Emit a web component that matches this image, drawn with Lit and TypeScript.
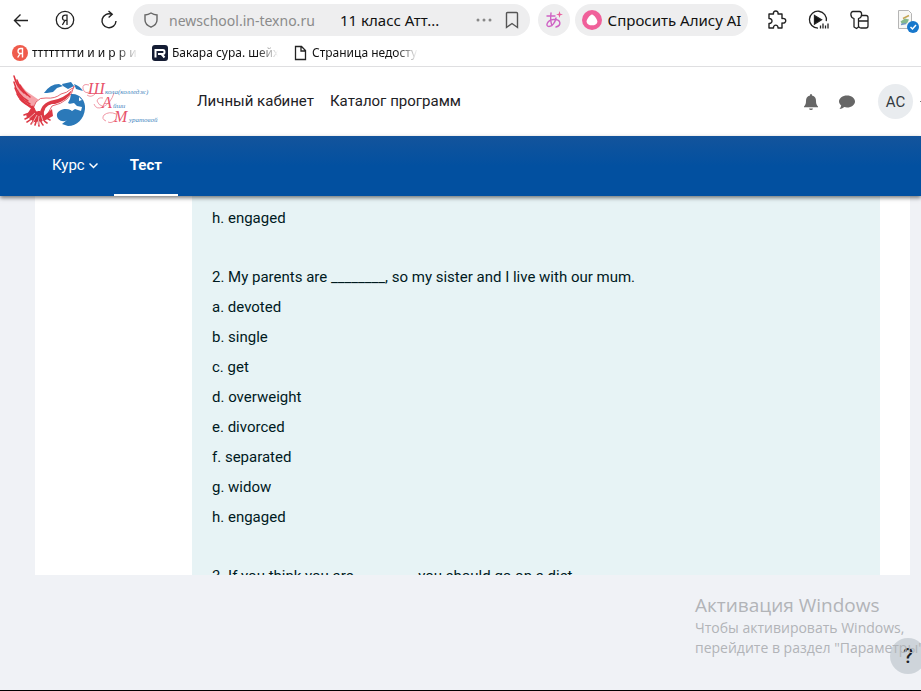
import { LitElement, html, css, svg } from "lit";
import { customElement } from "lit/decorators.js";

const question = (title: string, options: string[]) => html`
  <section class="question">
    ${title ? html`<p class="title">${title}</p>` : ""}
    <ul class="options">${options.map((o) => html`<li>${o}</li>`)}</ul>
  </section>`;

@customElement("browser-bar")
class BrowserBar extends LitElement {
  static styles = css`
    :host { display: block; background: #fff; border-bottom: 1px solid #dfdfe1; font-family: "Noto Sans", "Open Sans", sans-serif; color: #111; }
    button, a, input { font: inherit; color: inherit; text-decoration: none; }
    button { border: 0; background: none; padding: 0; display: flex; align-items: center; justify-content: center; }
    svg { display: block; flex: none; }
    .toolbar { display: flex; align-items: center; height: 40px; padding-left: 9px; }
    .tools { display: flex; flex: none; }
    .nav { gap: 20px; margin-right: 12px; }
    .ext { gap: 18px; margin-left: 17px; padding-right: 2px; }
    .address { flex: 1; min-width: 0; height: 32px; border-radius: 16px; background: #eeeeef; display: flex; align-items: center; padding: 0 10px 0 9px; font-size: 14px; }
    .url { border: 0; background: none; padding: 0; width: 160px; margin: 0 11px 0 9px; color: #8b8b8b; outline: 0; }
    .name { flex: 1; white-space: nowrap; font-size: 15px; }
    .more { margin-right: 12px; }
    .translate { width: 32px; height: 32px; border-radius: 50%; background: #eeeeef; margin: 0 5px 0 8px; }
    .alice { width: 173px; height: 32px; border-radius: 16px; background: #eeeeef; gap: 6px; font-size: 15px; white-space: nowrap; }
    .bookmarks { display: flex; gap: 14px; height: 26px; padding-left: 12px; align-items: center; font-size: 12px; }
    .bookmark { display: flex; align-items: center; gap: 4px; }
    .label { width: 106px; line-height: 20px; overflow: hidden; white-space: nowrap; -webkit-mask-image: linear-gradient(90deg, #000 80%, transparent); mask-image: linear-gradient(90deg, #000 80%, transparent); }
  `;

  render() {
    return html`
      <div class="toolbar">
        <div class="tools nav">
          <button aria-label="Назад"><svg width="24" height="24" fill="none" stroke="#222" stroke-width="1.4"><path d="M19 12.500H5.500M11.500 6.500l-6 6 6 6"/></svg></button>
          <button aria-label="Яндекс"><svg width="24" height="24" fill="none" stroke="#222" stroke-width="1.300"><circle cx="12" cy="12" r="8.700"/><path d="M14 17V7.200h-1.700c-3.600 0-3.800 5.200-.3 5.200h2M12 12.400L9.400 17"/></svg></button>
          <button aria-label="Обновить"><svg width="24" height="24" fill="none" stroke="#222" stroke-width="1.400"><path d="M14.500 6.200A7 7 0 1 0 19 13M11.500 3l3.700 3.300-3.600 3.200"/></svg></button>
        </div>
        <div class="address">
          <svg width="18" height="18" fill="none" stroke="#666" stroke-width="1.400"><path d="M9 2c2 1.300 4 1.900 6 2v5c0 3.500-2.500 5.700-6 7.200C5.500 14.700 3 12.500 3 9V4c2-.1 4-.7 6-2z"/></svg>
          <input class="url" aria-label="Адрес" value="newschool.in-texno.ru">
          <span class="name">11 класс Атт...</span>
          <button class="more" aria-label="Ещё"><svg width="16" height="16" fill="#888"><circle cx="2" cy="8" r="1.500"/><circle cx="8" cy="8" r="1.500"/><circle cx="14" cy="8" r="1.500"/></svg></button>
          <button aria-label="В закладки"><svg width="16" height="18" fill="none" stroke="#555" stroke-width="1.400"><path d="M2.500 2.500q0-1 1-1h9q1 0 1 1v14L8 12.500l-5.500 4z"/></svg></button>
        </div>
        <button class="translate" aria-label="Перевести страницу"><svg width="20" height="20" fill="none" stroke="#cf62c4" stroke-width="1.400" stroke-linecap="round"><path d="M3 6h8M7 3c-.5 4-.5 9 1 12.500M12 8c-1 5-4 8.500-7 8.500-4 0-2-6.500 4.500-7 8-.5 8 6 2.500 7.500"/><path d="M15.500 1l.8 2.700 2.700.8-2.700.8-.8 2.700-.8-2.700-2.700-.8 2.700-.8z" fill="#e9609f" stroke="none"/></svg></button>
        <button class="alice"><svg width="20" height="20"><circle cx="10" cy="10" r="10" fill="#f0609a"/><path d="M10 4.500c2 0 5.800 5.500 5.400 7.500-.5 2.600-2.500 3.300-5.400 3.300S5.100 14.600 4.600 12C4.200 10 8 4.500 10 4.500z" fill="#fff"/></svg>Спросить Алису AI</button>
        <div class="tools ext">
          <button aria-label="Расширения"><svg width="24" height="24" fill="none" stroke="#222" stroke-width="1.400" stroke-linejoin="round"><path d="M4 6h4.500c-1-4 5.500-4 4.500 0H17v4.500c5-1 5 5.500 0 4.500V20h-4c.5-3.800-5-3.800-4.500 0H4v-4.500c4 .5 4-5.500 0-5z"/></svg></button>
          <button aria-label="Видео"><svg width="24" height="24" fill="none" stroke="#222" stroke-width="1.300"><path d="M11 20.200a8.500 8.500 0 1 1 8.300-7M13.500 20.500v-3M16 20.500v-5M18.500 20.500v-3M21 20.500v-5"/><path d="M7.500 7.500l7 4.300-7 4.300z" fill="#111"/></svg></button>
          <button aria-label="Пароли"><svg width="24" height="24" fill="none" stroke="#222" stroke-width="1.300" stroke-linejoin="round"><path d="M5 10.500C.5 9 1.500 3.500 4 3.500h6.500c2.500 0 3.500 5.500-1 7V19l-2 1.500L5 19zM12.500 7.500H17q2 0 2 2V18q0 2-2 2h-5q-2 0-2-1.500M10 13h9"/></svg></button>
          <button aria-label="Дополнение"><svg width="28" height="28"><path d="M7.500 4.500h10l3 3v15h-13z" fill="#f7f7f5" stroke="#b5b5b5"/><path d="M9.500 15.500l4.500-3 4 1-2 4-5 .5z" fill="#86b98c"/><path d="M12 12.500l6-3" stroke="#c5a552" stroke-width="1.500"/><path d="M10 18.500l5-1" stroke="#779ac5" stroke-width="1.500"/><circle cx="22" cy="21" r="6" fill="#1878cc"/><path d="M19.500 21l2 2 3.500-4" fill="none" stroke="#fff" stroke-width="1.500"/></svg></button>
        </div>
      </div>
      <nav class="bookmarks">
        <a class="bookmark" href="#"><svg width="16" height="16"><circle cx="8" cy="8" r="8" fill="#ef5b4c"/><path d="M10.500 12.500v-9H8.700c-3.400 0-3.600 5-.3 5h1.800M8.200 8.500l-2.500 4" fill="none" stroke="#fff" stroke-width="1.400"/></svg><span class="label">тттттттти и и р р и и</span></a>
        <a class="bookmark" href="#"><svg width="16" height="16"><rect width="16" height="16" rx="3" fill="#141c33"/><path d="M3.500 12.500V5h7.500q1.500 0 1.500 2T11 9H6M9.500 9l3 3.500" fill="none" stroke="#fff" stroke-width="2"/></svg><span class="label">Бакара сура. шейх</span></a>
        <a class="bookmark" href="#"><svg width="16" height="16" fill="none" stroke="#222" stroke-width="1.300"><path d="M3.500 1.500h6l4 4v9h-10zM9 1.500V6h4.500"/></svg><span class="label">Страница недоступна</span></a>
      </nav>`;
  }
}

@customElement("school-logo")
class SchoolLogo extends LitElement {
  static styles = css`
    :host { display: block; }
    svg { display: block; }
    .script { font-family: "Liberation Serif", serif; font-style: italic; }
    .cap { fill: #e8526a; font-size: 16px; }
    .rest { fill: #3f86c0; font-size: 7px; }
  `;
  render() {
    const wing = [[2, 1, 12, 18], [5, 5, 15, 20], [2, 7, 16, 26], [8, 10, 18, 22], [3, 13, 18, 29], [5, 19, 20, 32], [8, 24, 22, 34]];
    const tail = [[12, 40], [13, 44], [15, 47], [19, 49], [23, 50], [27, 51], [31, 50], [35, 48], [38, 45]];
    return html`
      <svg width="150" height="54" role="img" aria-label="Логотип школы">
        <path d="M59 19c8-1 15 6 14 15-1 10-8 17-17 17l-6-2 5-4c-4 3-11 0-10-6 2-5 9-6 14-4l3-4-6-3 2-4z" fill="#2b79b9"/>
        <path d="M32 18q6-9 15-9l4 2-6 2-4 4-6 1zM50 9l9-2 3 4-6 3-5-3zM62 9q6 2 9 7l-7-2z" fill="#2b79b9"/>
        <path d="M57 29l5-1 3 3 5 1-1 4-6-2-3 2-4-3zM67 22l3 3-3 1z" fill="#fff"/>
        <path d="M14 16L27 25 31 23 36 28 28 38 18 33 9 24 6 16 2 3 9 10z" fill="#f5a3a9"/>
        <path d="M24 27q4-5 10-4 9 1 15-4 6-1 10-5 4-1 3-3-3 16-22 20l-5 9-10 4-5-8z" fill="#fff" stroke="#e25560" stroke-width="0.900"/>
        <path d="M40 29q-9 2-8 12l-5 2q1-16 15-18 10-2 18-10-3 10-17 14z" fill="#dc3945"/>
        <path d="M21 30l4 8 7 3 8-7 1 7-9 5-10 1-8-6z" fill="#dc3945"/>
        ${wing.map(([x, y, a, b]) => svg`<path d="M${x} ${y}Q${x + 3} ${b - 6} ${a} ${b}" fill="none" stroke="#df3541" stroke-width="1.500" stroke-linecap="round"/>`)}
        ${tail.map(([x, y]) => svg`<path d="M${x} ${y}Q${(x + 27) / 2 - 1} ${y - 3} 27 37" fill="none" stroke="#dc3945" stroke-width="1.600" stroke-linecap="round"/>`)}
        <g fill="none" stroke="#fff" stroke-width="0.600"><path d="M14 46l9-8M20 49l5-9M26 50l1-9M32 49l-3-9"/></g>
        <g fill="none" stroke="#ec7f90" stroke-width="0.800"><path d="M77 10q-7-2-6 4 2 6 8 2M75 20q4 3 8-1M92 32q-6-2-7-6 1-4 6-3M82 29q2 6 9 3 8-4 11-14M94 46q-5-2-2-6 5-4 12-1M96 47q4 2 8-3"/></g>
        <g class="script">
          <text class="cap" x="76" y="19">Ш</text><text class="rest" x="93" y="19">кола(колледж)</text>
          <text class="cap" x="90" y="33">А</text><text class="rest" x="101" y="33">йши</text>
          <text class="cap" x="102" y="47">М</text><text class="rest" x="117" y="47">уратовой</text>
        </g>
      </svg>`;
  }
}

@customElement("app-root")
class AppRoot extends LitElement {
  static styles = css`
    :host { display: flex; flex-direction: column; height: 100vh; position: relative; overflow: hidden; background: #f0f2f6; font-family: Roboto, "Noto Sans", sans-serif; font-size: 15px; color: #1d2125; box-sizing: border-box; border-bottom: 1px solid #000; }
    a { color: inherit; text-decoration: none; }
    button { border: 0; padding: 0; background: none; font: inherit; color: inherit; }
    svg { display: block; }
    .site { display: flex; align-items: center; height: 69px; flex: none; background: #fff; padding-left: 12px; }
    .menu { display: flex; gap: 16px; margin-left: 35px; flex: 1; white-space: nowrap; line-height: 20px; padding-bottom: 2px; }
    .actions { display: flex; align-items: center; gap: 20px; flex: none; }
    .user { display: flex; align-items: center; gap: 7px; margin-left: 3px; }
    .avatar { width: 35px; height: 35px; border-radius: 50%; background: #e9ecef; color: #343a40; display: flex; align-items: center; justify-content: center; }
    .caret { width: 1px; height: 1px; background: #777; }
    .tabs { display: flex; height: 60px; flex: none; padding-left: 36px; background: linear-gradient(#13549c, #0250a0 50%); color: #fff; box-shadow: 0 2px 4px rgba(0, 0, 0, 0.5); z-index: 1; }
    .tab { display: flex; align-items: center; gap: 4px; padding: 0 16px; border-bottom: 2px solid transparent; box-sizing: border-box; }
    .active { border-color: #fff; font-weight: 700; }
    .page { flex: 1; min-height: 0; overflow: hidden; margin: 0 11px 115px 35px; background: #fff; padding: 0 30px 0 157px; }
    .quiz { background: #e7f3f5; color: #001a1e; padding: 7px 20px; }
    .question + .question { margin-top: 30px; }
    .title { margin: 0; line-height: 29px; }
    .options { margin: 0; padding: 0; list-style: none; line-height: 30px; }
    .activation { position: absolute; left: calc(100% - 226px); bottom: 32px; white-space: nowrap; font-family: "Open Sans", "Noto Sans", sans-serif; color: #b2b4b8; font-size: 14px; line-height: 20px; pointer-events: none; }
    .heading { margin: 0; font-size: 19px; line-height: 26px; font-weight: 400; }
    .line { margin: 0; }
    .help { position: absolute; right: -5px; bottom: 16px; width: 36px; height: 36px; border-radius: 50%; background: #ced4da; font-size: 20px; font-weight: 500; }
    .taskbar { position: absolute; left: 48px; bottom: -1px; width: 48px; height: 1px; background: #555; }
  `;

  render() {
    return html`
      <browser-bar></browser-bar>
      <header class="site">
        <a href="#"><school-logo></school-logo></a>
        <nav class="menu"><a href="#">Личный кабинет</a><a href="#">Каталог программ</a></nav>
        <div class="actions">
          <button aria-label="Уведомления"><svg width="16" height="18" fill="#666"><path d="M8 1q1 0 1 1.400c3 .6 4 2.600 4 5.600 0 3 .7 4 2 5.500v.8H1v-.8C2.300 12 3 11 3 8c0-3 1-5 4-5.600Q7 1 8 1zM6 15.500h4q-.3 1.500-2 1.500t-2-1.500z"/></svg></button>
          <button aria-label="Сообщения"><svg width="16" height="16" fill="#666"><path d="M8 1.500c4.500 0 8 2.700 8 6s-3.500 6-8 6q-1.400 0-2.700-.4Q3 15 .5 15 2 13 2.200 11.500C.8 10.300 0 9 0 7.500c0-3.300 3.500-6 8-6z"/></svg></button>
          <button class="user" aria-label="Меню пользователя"><span class="avatar">AC</span><span class="caret"></span></button>
        </div>
      </header>
      <nav class="tabs">
        <a class="tab" href="#">Курс <svg width="9" height="8" fill="none" stroke="#fff" stroke-width="1.500"><path d="M.5 2.500l4 4 4-4"/></svg></a>
        <a class="tab active" href="#">Тест</a>
      </nav>
      <main class="page">
        <div class="quiz">
          ${question("", ["h. engaged"])}
          ${question("2. My parents are ________, so my sister and I live with our mum.", ["a. devoted", "b. single", "c. get", "d. overweight", "e. divorced", "f. separated", "g. widow", "h. engaged"])}
          ${question("3. If you think you are ________, you should go on a diet.", [])}
        </div>
      </main>
      <button class="help" aria-label="Справка">?</button>
      <aside class="activation">
        <p class="heading">Активация Windows</p>
        <p class="line">Чтобы активировать Windows,</p>
        <p class="line">перейдите в раздел "Параметры".</p>
      </aside>
      <div class="taskbar"></div>`;
  }
}
